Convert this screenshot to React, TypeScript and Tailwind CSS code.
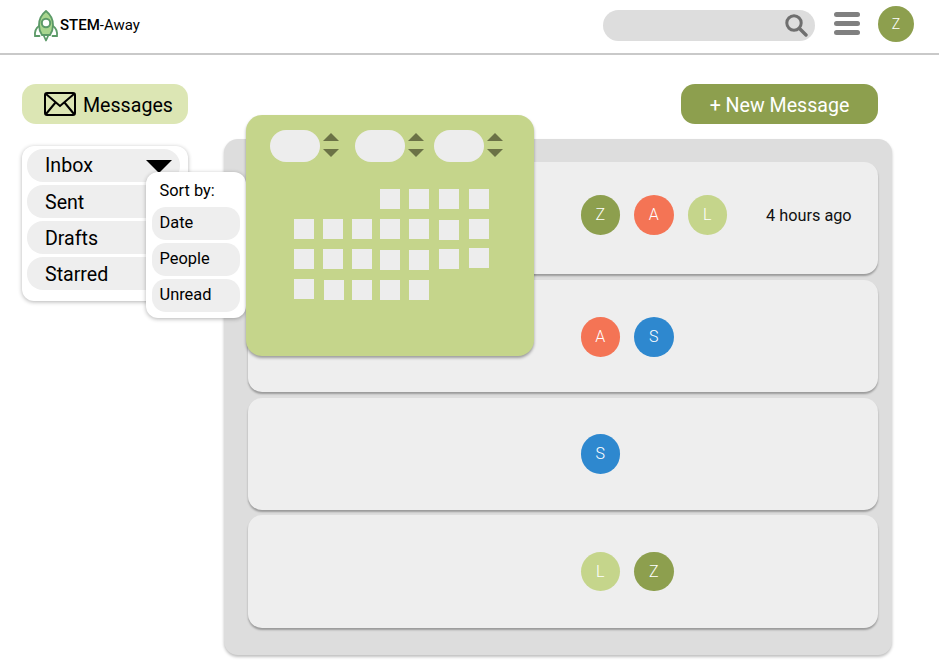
import React from "react";

const font = { fontFamily: "Roboto, sans-serif" };

function Rocket() {
  return (
    <svg className="mt-[2px]" width="26" height="32" viewBox="0 0 26 32" fill="none">
      <path d="M13 1 C8 5 6 10 6 15 C6 19 7 22 9 25 H17 C19 22 20 19 20 15 C20 10 18 5 13 1 Z" fill="#a9d68f" stroke="#5c9a68" strokeWidth="1.8" />
      <circle cx="13" cy="13" r="4.2" fill="#fff" stroke="#5c9a68" strokeWidth="2" />
      <path d="M6 16 C3 18 1.5 21 2 26 H6.5 M20 16 C23 18 24.5 21 24 26 H19.5" stroke="#5c9a68" strokeWidth="1.8" strokeLinecap="round" />
      <path d="M10.5 25 L13 30.5 L15.5 25" stroke="#5c9a68" strokeWidth="1.8" strokeLinejoin="round" />
    </svg>
  );
}

function Mail() {
  return (
    <svg width="32" height="24" viewBox="0 0 32 24" fill="none" stroke="#000" strokeWidth="2">
      <rect x="1" y="1" width="30" height="22" rx="2" />
      <path d="M2 2 L16 14 L30 2 M2 22 L11.5 10.5 M30 22 L20.5 10.5" />
    </svg>
  );
}

function Search() {
  return (
    <svg width="23" height="23" viewBox="0 0 23 23" fill="none" stroke="#6f6f6f">
      <circle cx="9" cy="9" r="7.2" strokeWidth="3" />
      <path d="M14.5 14.5 L21 21" strokeWidth="3.4" strokeLinecap="round" />
    </svg>
  );
}

function Avatar({ letter, color }: { letter: string; color: string }) {
  return (
    <div className={`flex h-[39.5px] w-[39.5px] shrink-0 items-center justify-center rounded-full text-base font-light text-white ${color}`}>
      {letter}
    </div>
  );
}

function Spinner() {
  return (
    <div className="mb-[2px] flex flex-col gap-[8px]">
      <div className="h-0 w-0 border-x-8 border-b-[8px] border-x-transparent border-b-[#6b7246]" />
      <div className="h-0 w-0 border-x-8 border-t-[8px] border-x-transparent border-t-[#6b7246]" />
    </div>
  );
}

function Pill() {
  return <div className="h-8 w-[50px] rounded-[16px] bg-[#ededed]" />;
}

const cells = [
  "col-start-4", "", "", "col-start-7",
  "", "", "", "", "", "translate-y-[1px]", "",
  "", "", "", "translate-y-[1px]", "translate-y-[1px]", "", "-translate-y-[1px]",
  "", "translate-x-[1px] translate-y-[1px]", "translate-y-[1px]", "translate-y-[1px]", "translate-y-[1px]",
];

const navItems = [
  { label: "Inbox", text: "" },
  { label: "Sent", text: "pt-[2px]" },
  { label: "Drafts", text: "pt-[3px]" },
  { label: "Starred", text: "pt-[3px]" },
];

function Message({ children, className }: { children: React.ReactNode; className: string }) {
  return (
    <div className={`flex h-[112px] items-center gap-[14px] rounded-[14px] bg-[#eeeeee] pl-[332.5px] shadow-[0_2px_2px_rgba(0,0,0,0.3)] ${className}`}>
      {children}
    </div>
  );
}

export default function App() {
  return (
    <div style={font} className="relative h-[667px] w-[939px] overflow-hidden bg-white text-black">
      <header className="flex h-[55px] items-center border-b-2 border-[#c9c9c9] pb-[4px] pl-[33px] pr-[25px]">
        <Rocket />
        <span className="ml-[1px] mt-[2px] text-[15px] font-medium">
          STEM<span className="font-normal">-Away</span>
        </span>
        <div className="ml-auto mt-[2px] flex h-[31px] w-[212px] items-center justify-end rounded-[16px] bg-[#dddddd] pr-[7px]">
          <Search />
        </div>
        <div className="mb-[2px] ml-[19px] flex w-[26px] flex-col gap-[4.5px]">
          <div className="h-[4.5px] rounded-full bg-[#808080]" />
          <div className="h-[4.5px] rounded-full bg-[#808080]" />
          <div className="h-[4.5px] rounded-full bg-[#808080]" />
        </div>
        <div className="mb-[2px] ml-[18px] flex h-9 w-9 items-center justify-center rounded-full bg-[#8d9f4e] text-sm font-light text-white">Z</div>
      </header>

      <main className="flex pl-[22px] pr-[47px] pt-[29px]">
        <aside className="w-[166px] shrink-0">
          <div className="flex h-10 items-center gap-[7px] rounded-[14px] bg-[#dce6b4] pl-[22px] text-[19.6px]">
            <Mail />
            <span className="pt-[3px]">Messages</span>
          </div>
          <nav className="mt-[22px] flex h-[155px] flex-col gap-[3px] rounded-[12px] bg-white px-[5px] pt-[3px] text-[19.6px] shadow-[0_1px_4px_rgba(0,0,0,0.3)]">
            {navItems.map((item, i) => (
              <div key={item.label} className="flex h-[33px] w-[153px] items-center justify-between rounded-[16px] bg-[#eeeeee] pl-[18px] pr-[8px]">
                <span className={item.text}>{item.label}</span>
                {i === 0 && <div className="mt-[2px] h-0 w-0 border-x-[13px] border-t-[13px] border-x-transparent border-t-black" />}
              </div>
            ))}
          </nav>
        </aside>

        <section className="ml-[36px] flex-1">
          <div className="flex justify-end pr-[14px]">
            <button className="h-10 w-[197px] rounded-[14px] bg-[#8d9f4e] pt-[3px] text-[19.6px] text-white">+ New Message</button>
          </div>
          <div className="mt-[15px] flex h-[516px] flex-col rounded-[14px] bg-[#dddddd] pl-[24px] pr-[14px] pt-[23px] shadow-[0_2px_3px_rgba(0,0,0,0.25)]">
            <Message className="pb-[6px]">
              <Avatar letter="Z" color="bg-[#8d9f4e]" />
              <Avatar letter="A" color="bg-[#f47455]" />
              <Avatar letter="L" color="bg-[#c5d58b]" />
              <span className="ml-[25px] pt-[2px] text-[16.3px] text-[#111]">4 hours ago</span>
            </Message>
            <Message className="mt-[6px] pt-[2px]">
              <Avatar letter="A" color="bg-[#f47455]" />
              <Avatar letter="S" color="bg-[#2e88cf]" />
            </Message>
            <Message className="mt-[6px]">
              <Avatar letter="S" color="bg-[#2e88cf]" />
            </Message>
            <Message className="mt-[5px] h-[113px]">
              <Avatar letter="L" color="bg-[#c5d58b]" />
              <Avatar letter="Z" color="bg-[#8d9f4e]" />
            </Message>
          </div>
        </section>
      </main>

      <div className="absolute left-[146px] top-[172px] flex h-[146px] w-[100px] flex-col gap-[3px] rounded-[12px] bg-white px-[6px] pt-[5px] shadow-[0_1px_4px_rgba(0,0,0,0.3)]">
        <div className="flex h-[27px] items-center pl-[7.5px] pt-[2px] text-[16.4px]">Sort by:</div>
        {["Date", "People", "Unread"].map((t) => (
          <div key={t} className="flex h-[33px] w-[88px] items-center rounded-[14px] bg-[#eeeeee] pl-[7.5px] text-[16.4px]">{t}</div>
        ))}
      </div>

      <div className="absolute left-[246px] top-[115px] h-[241px] w-[288px] rounded-[16px] bg-[#c5d58b] shadow-[0_2px_3px_rgba(0,0,0,0.35)]">
        <div className="flex items-center pl-[24px] pt-[15px]">
          <Pill />
          <div className="ml-[3px]"><Spinner /></div>
          <div className="ml-[16px]"><Pill /></div>
          <div className="ml-[3px]"><Spinner /></div>
          <div className="ml-[10px]"><Pill /></div>
          <div className="ml-[3px]"><Spinner /></div>
        </div>
        <div className="ml-[48px] mt-[27px] grid grid-cols-[29px_29px_28px_29px_30px_30px_20px] gap-y-[10px]">
          {cells.map((c, i) => (
            <div key={i} className={`h-5 w-5 bg-[#ededed] ${c}`} />
          ))}
        </div>
      </div>
    </div>
  );
}
